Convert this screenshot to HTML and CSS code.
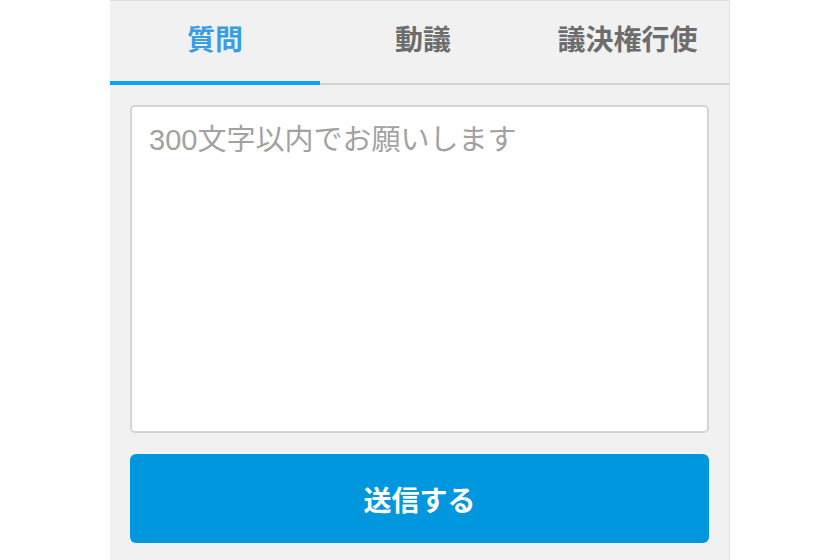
FILE: index.html
```html
<!DOCTYPE html>
<html lang="ja">
<head>
<meta charset="utf-8">
<link rel="stylesheet" href="styles.css">
</head>
<body>
<div class="panel">
  <nav class="tabs">
    <div class="tab active">質問</div>
    <div class="tab">動議</div>
    <div class="tab">議決権行使</div>
  </nav>
  <form class="form">
    <textarea class="input" placeholder="300文字以内でお願いします"></textarea>
    <button type="button" class="submit">送信する</button>
  </form>
</div>
</body>
</html>
```
FILE: styles.css
```css
html, body {
  margin: 0;
  padding: 0;
  background: #ffffff;
}
body {
  font-family: "Noto Sans CJK JP", "Noto Sans", sans-serif;
  height: 560px;
  overflow: hidden;
}
.panel {
  margin-left: 110px;
  width: 620px;
  height: 560px;
  box-sizing: border-box;
  background: #f1f1f1;
  border-top: 1px solid #dcdcdc;
  border-right: 1px solid #e3e3e3;
}
.tabs {
  display: grid;
  grid-template-columns: 210px 206px 1fr;
  height: 84px;
}
.tab {
  box-sizing: border-box;
  display: flex;
  align-items: center;
  justify-content: center;
  padding-bottom: 8px;
  border-bottom: 2px solid #d2d2d2;
  font-size: 28px;
  font-weight: 700;
  color: #6d6d6d;
}
.tab.active {
  color: #3a9de3;
  border-bottom: 4px solid #0aa2f2;
  padding-bottom: 6px;
}
.form {
  display: flex;
  flex-direction: column;
  gap: 21px;
  padding: 20px 20px 0 20px;
}
.input {
  box-sizing: border-box;
  width: 579px;
  height: 328px;
  margin: 0;
  border: 2px solid #d4d4d4;
  border-radius: 5px;
  background: #ffffff;
  padding: 16px 17px;
  font-family: "Liberation Sans", "Noto Sans CJK JP", sans-serif;
  font-size: 29px;
  line-height: 1.2;
  color: #333;
  resize: none;
  outline: none;
}
.input::placeholder {
  color: #a2a2a2;
}
.submit {
  width: 579px;
  height: 89px;
  margin: 0;
  border: none;
  border-radius: 6px;
  background: #0097df;
  color: #ffffff;
  font-family: "Noto Sans CJK JP", "Noto Sans", sans-serif;
  font-size: 28px;
  font-weight: 700;
}
```
